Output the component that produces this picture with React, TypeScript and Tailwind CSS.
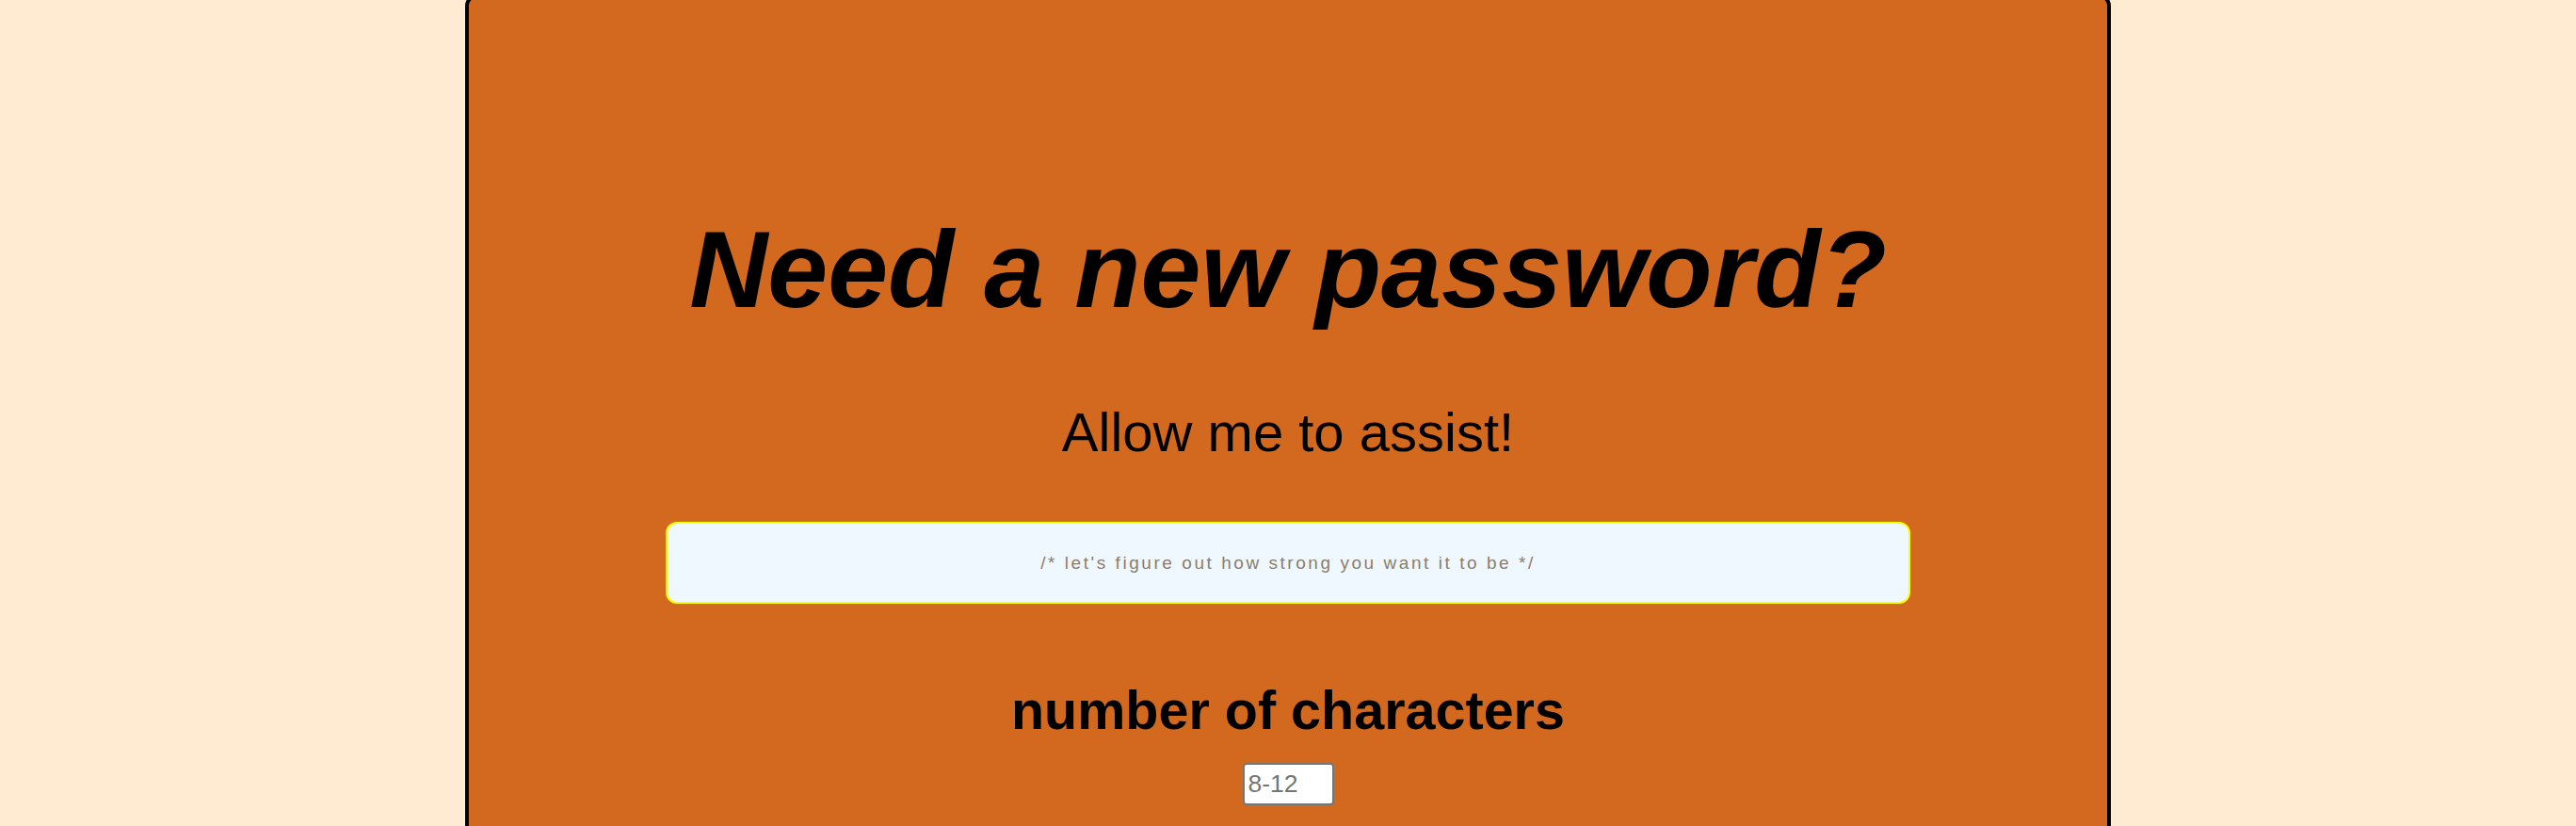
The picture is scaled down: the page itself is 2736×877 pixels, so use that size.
export default function App() {
  return (
    <div className="min-h-screen w-full overflow-hidden bg-[#ffebd1] font-['Liberation_Sans',Arial,sans-serif]">
      <div className="mx-auto -mt-[6px] flex w-[1748px] flex-col items-center rounded-[12px] border-4 border-black bg-[#d2691e] pb-[60px] pt-[231px] text-black">
        <h1 className="text-[115px] font-bold italic leading-none">Need a new password?</h1>
        <p className="mt-[86px] text-[58px] leading-none">Allow me to assist!</p>
        <input
          type="text"
          placeholder="/* let's figure out how strong you want it to be */"
          className="mt-[66px] h-[87px] w-[1322px] rounded-[12px] border-2 border-[#ffff00] bg-[#f0f8ff] text-center text-[19px] tracking-[2.55px] text-[#8b7d6b] placeholder:text-[#8b7d6b] outline-none"
        />
        <h2 className="mt-[85px] text-[57.5px] font-bold leading-none">number of characters</h2>
        <input
          type="text"
          placeholder="8-12"
          className="mt-[26px] h-[45px] w-[97px] rounded-[4px] border-2 border-[#767676] bg-white px-[4px] text-[26.5px] text-[#757575] placeholder:text-[#757575]"
        />
      </div>
    </div>
  );
}
